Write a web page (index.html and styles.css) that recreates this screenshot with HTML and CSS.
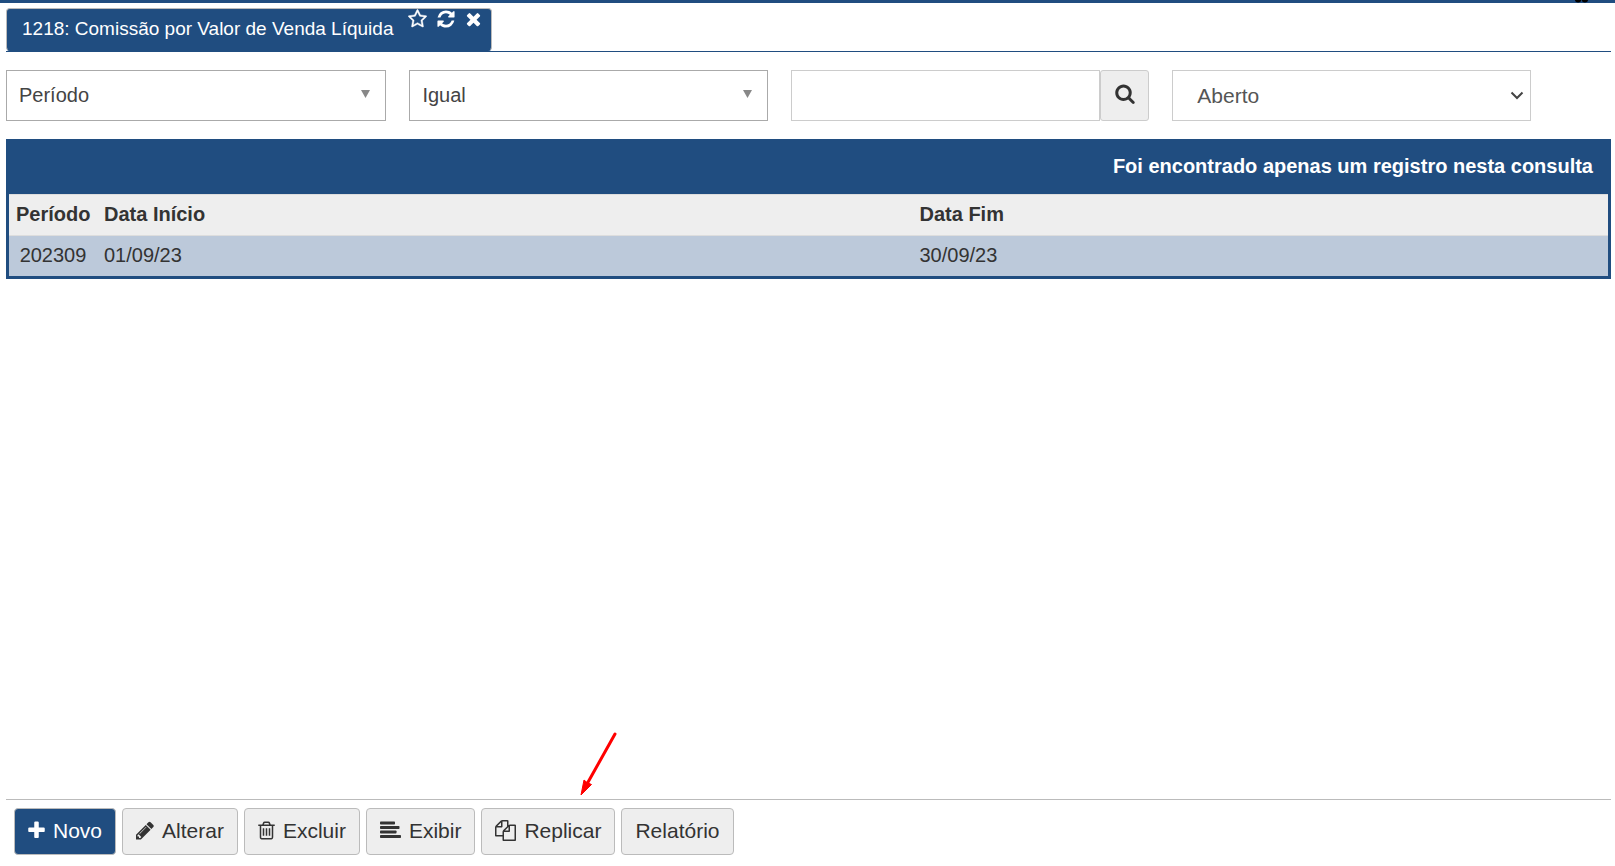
FILE: index.html
```html
<!DOCTYPE html>
<html lang="pt-BR">
<head>
<meta charset="utf-8">
<title>Comissão por Valor de Venda Líquida</title>
<link rel="stylesheet" href="styles.css">
</head>
<body>
<div class="topbar">
  <svg class="topbar-mark" viewBox="0 0 13 3" aria-hidden="true"><path d="M0 0h6.2q0 2.4-3.1 2.4T0 0zM6.8 0H13q0 2.4-3.1 2.4T6.8 0z"/></svg>
</div>

<header class="tabs">
  <div class="tab">
    <span class="tab-title">1218: Comissão por Valor de Venda Líquida</span>
    <button class="tab-action" type="button" aria-label="Favorito"><svg class="ico-star" viewBox="64 0 1664 1792"><path d="M1201 1004l306-297-422-62-189-382-189 382-422 62 306 297-73 421 378-199 377 199zm527-357q0 22-26 48l-363 354 86 500q1 7 1 20 0 50-41 50-19 0-40-12l-449-236-449 236q-22 12-40 12-21 0-31.5-14.5t-10.5-35.5q0-6 2-20l86-500-364-354q-25-27-25-48 0-37 56-46l502-73 225-455q19-41 49-41t49 41l225 455 502 73q56 9 56 46z"/></svg></button>
    <button class="tab-action" type="button" aria-label="Atualizar"><svg class="ico-refresh" viewBox="128 0 1536 1792"><path d="M1639 1056q0 5-1 7-64 268-268 434.5t-478 166.5q-146 0-282.5-55t-243.5-157l-129 129q-19 19-45 19t-45-19-19-45v-448q0-26 19-45t45-19h448q26 0 45 19t19 45-19 45l-137 137q71 66 161 102t187 36q134 0 250-65t186-179q11-17 53-117 8-23 30-23h192q13 0 22.5 9.5t9.5 22.5zm25-800v448q0 26-19 45t-45 19h-448q-26 0-45-19t-19-45 19-45l138-138q-148-137-349-137-134 0-250 65t-186 179q-11 17-53 117-8 23-30 23h-199q-13 0-22.5-9.5t-9.5-22.5v-7q65-268 270-434.5t480-166.5q146 0 284 55.5t245 156.5l130-129q19-19 45-19t45 19 19 45z"/></svg></button>
    <button class="tab-action" type="button" aria-label="Fechar"><svg class="ico-close" viewBox="192 0 1408 1792"><path d="M1490 1322q0 40-28 68l-136 136q-28 28-68 28t-68-28l-294-294-294 294q-28 28-68 28t-68-28l-136-136q-28-28-28-68t28-68l294-294-294-294q-28-28-28-68t28-68l136-136q28-28 68-28t68 28l294 294 294-294q28-28 68-28t68 28l136 136q28 28 28 68t-28 68l-294 294 294 294q28 28 28 68z"/></svg></button>
  </div>
</header>

<main class="content">
  <form class="filters">
    <div class="field">
      <select class="control control-dark" aria-label="Campo"><option>Período</option></select>
      <svg class="caret" viewBox="0 0 9 8" aria-hidden="true"><path d="M0 0h9L4.500 8z"/></svg>
    </div>
    <div class="field">
      <select class="control control-dark" aria-label="Operador"><option>Igual</option></select>
      <svg class="caret" viewBox="0 0 9 8" aria-hidden="true"><path d="M0 0h9L4.500 8z"/></svg>
    </div>
    <div class="field search">
      <input class="control" type="text" aria-label="Valor">
      <button class="search-btn" type="button" aria-label="Pesquisar"><svg class="ico-search" viewBox="64 0 1664 1792"><path d="M1216 832q0-185-131.500-316.500t-316.500-131.500-316.500 131.500-131.500 316.500 131.500 316.500 316.500 131.500 316.500-131.500 131.500-316.500zm512 832q0 52-38 90t-90 38q-54 0-90-38l-343-342q-179 124-399 124-143 0-273.500-55.500t-225-150-150-225-55.500-273.500 55.500-273.500 150-225 225-150 273.500-55.500 273.500 55.500 225 150 150 225 55.500 273.500q0 220-124 399l343 343q37 37 37 90z"/></svg></button>
    </div>
    <div class="field">
      <select class="control control-status" aria-label="Situação"><option>Aberto</option></select>
      <svg class="chevron" viewBox="0 0 14 9" aria-hidden="true"><path d="M1.500 1.500L7 7l5.500-5.500"/></svg>
    </div>
  </form>

  <section class="results">
    <p class="results-title">Foi encontrado apenas um registro nesta consulta</p>
    <table class="grid">
      <colgroup><col class="col-period"><col class="col-start"><col></colgroup>
      <thead><tr><th class="center">Período</th><th>Data Início</th><th>Data Fim</th></tr></thead>
      <tbody><tr><td class="center">202309</td><td>01/09/23</td><td>30/09/23</td></tr></tbody>
    </table>
  </section>
</main>

<footer class="actions">
  <button class="btn btn-primary" type="button"><svg class="ico-plus" viewBox="192 0 1408 1792"><path d="M1600 736v192q0 40-28 68t-68 28h-416v416q0 40-28 68t-68 28h-192q-40 0-68-28t-28-68v-416h-416q-40 0-68-28t-28-68v-192q0-40 28-68t68-28h416v-416q0-40 28-68t68-28h192q40 0 68 28t28 68v416h416q40 0 68 28t28 68z"/></svg>Novo</button>
  <button class="btn" type="button"><svg class="ico-pencil" viewBox="128 0 1536 1792"><path d="M491 1536l91-91-235-235-91 91v107h128v128h107zm523-928q0-22-22-22-10 0-17 7l-542 542q-7 7-7 17 0 22 22 22 10 0 17-7l542-542q7-7 7-17zm-54-192l416 416-832 832h-416v-416zm683 96q0 53-37 90l-166 166-416-416 166-165q36-38 90-38 53 0 91 38l235 234q37 39 37 91z"/></svg>Alterar</button>
  <button class="btn" type="button"><svg class="ico-trash" viewBox="192 0 1408 1792"><path d="M704 736v576q0 14-9 23t-23 9h-64q-14 0-23-9t-9-23v-576q0-14 9-23t23-9h64q14 0 23 9t9 23zm256 0v576q0 14-9 23t-23 9h-64q-14 0-23-9t-9-23v-576q0-14 9-23t23-9h64q14 0 23 9t9 23zm256 0v576q0 14-9 23t-23 9h-64q-14 0-23-9t-9-23v-576q0-14 9-23t23-9h64q14 0 23 9t9 23zm128 724v-948h-896v948q0 22 7 40.500t14.500 27 10.500 8.500h832q3 0 10.500-8.500t14.500-27 7-40.500zm-672-1076h448l-48-117q-7-9-17-11h-317q-10 2-17 11zm928 32v64q0 14-9 23t-23 9h-96v948q0 83-47 143.500t-113 60.500h-832q-66 0-113-58.500t-47-141.500v-952h-96q-14 0-23-9t-9-23v-64q0-14 9-23t23-9h309l70-167q15-37 54-63t79-26h320q40 0 79 26t54 63l70 167h309q14 0 23 9t9 23z"/></svg>Excluir</button>
  <button class="btn" type="button"><svg class="ico-wide" viewBox="0 0 1792 1792"><rect y="1280" width="1792" height="256" rx="64"/><rect y="896" width="1408" height="256" rx="64"/><rect y="512" width="1664" height="256" rx="64"/><rect y="128" width="1280" height="256" rx="64"/></svg>Exibir</button>
  <button class="btn btn-marked" type="button"><svg class="ico-wide" viewBox="0 0 1792 1792"><path d="M1696 384q40 0 68 28t28 68v1216q0 40-28 68t-68 28h-960q-40 0-68-28t-28-68v-288h-544q-40 0-68-28t-28-68v-672q0-40 20-88t48-76l408-408q28-28 76-48t88-20h416q40 0 68 28t28 68v328q68-40 128-40h416zm-544 213l-299 299h299v-299zm-640-384l-299 299h299v-299zm196 647l316-316v-416h-384v416q0 40-28 68t-68 28h-416v640h512v-256q0-40 20-88t48-76zm956 804v-1152h-384v416q0 40-28 68t-68 28h-416v640h896z"/></svg>Replicar<svg class="pointer" viewBox="0 0 38 64" aria-hidden="true"><path class="pointer-line" d="M35 2L7 52"/><path class="pointer-head" d="M1 63L4 48l3 2.500 4.500 2z"/></svg></button>
  <button class="btn" type="button">Relatório</button>
</footer>
</body>
</html>
```

FILE: styles.css
```css
* {
  box-sizing: border-box;
}

body {
  margin: 0;
  min-height: 100vh;
  display: flex;
  flex-direction: column;
  background: #fff;
  color: #333;
  font-family: "Liberation Sans", Arial, sans-serif;
  font-size: 20px;
}

button,
input,
select {
  font: inherit;
}

svg {
  display: block;
  flex: none;
  fill: currentColor;
}

.topbar {
  display: flex;
  justify-content: flex-end;
  height: 3px;
  padding-right: 27px;
  background: #204d80;
}

.topbar-mark {
  width: 13px;
  height: 3px;
  color: #000;
}

.tabs {
  display: flex;
  margin: 5px 4px 0 6px;
  border-bottom: 1px solid #204d80;
}

.tab {
  display: flex;
  align-items: flex-start;
  gap: 10px;
  height: 43px;
  padding: 0 9px 0 15px;
  border: 1px solid #bbb;
  border-bottom-color: #204d80;
  border-radius: 4px;
  background: #204d80;
  color: #fff;
}

.tab-title {
  padding-right: 5px;
  font-size: 19px;
  line-height: 40px;
}

.tab-action {
  padding: 0;
  border: 0;
  background: none;
  color: inherit;
}

.ico-star {
  width: 19px;
  height: 20px;
  stroke: currentColor;
  stroke-width: 40;
}

.ico-refresh {
  width: 18px;
  height: 20px;
}

.ico-close {
  width: 17px;
  height: 20px;
}

.content {
  flex: 1;
  padding: 18px 4px 0 6px;
}

.filters {
  display: grid;
  grid-template-columns: 381fr 359fr 359fr 359fr;
  gap: 23px;
  padding-right: 5%;
}

.field {
  position: relative;
  display: flex;
  min-width: 0;
}

.control {
  flex: 1;
  min-width: 0;
  height: 51px;
  margin: 0;
  padding: 0 12px 2px;
  border: 1px solid #ccc;
  border-radius: 0;
  background: #fff;
  color: #444;
  appearance: none;
}

.control-dark {
  border-color: #aaa;
}

.control-status {
  padding: 0 24px;
  color: #555;
  font-size: 21px;
}

.caret {
  position: absolute;
  top: 20px;
  right: 16px;
  width: 9px;
  height: 8px;
  color: #888;
  pointer-events: none;
}

.chevron {
  position: absolute;
  top: 21px;
  right: 7px;
  width: 14px;
  height: 9px;
  fill: none;
  stroke: #444;
  stroke-width: 2;
  pointer-events: none;
}

.search-btn {
  display: flex;
  align-items: center;
  justify-content: center;
  width: 49px;
  padding: 0 0 5px;
  border: 1px solid #ccc;
  border-radius: 3px;
  background: #eee;
  color: #333;
}

.ico-search {
  width: 20px;
  height: 21px;
}

.results {
  margin-top: 18px;
  border: 3px solid #204d80;
}

.results-title {
  margin: 0;
  padding: 0 15px 4px;
  background: #204d80;
  color: #fff;
  font-weight: bold;
  line-height: 48px;
  text-align: right;
}

.grid {
  width: 100%;
  border-collapse: collapse;
  table-layout: fixed;
}

.col-period {
  width: 88px;
}

.col-start {
  width: 51%;
}

.grid th,
.grid td {
  padding: 0 7px 2px;
  border-top: 1px solid #ddd;
  line-height: 38px;
  text-align: left;
}

.grid th {
  background: #eee;
}

.grid td {
  background: #bcc9da;
}

.grid .center {
  text-align: center;
}

.actions {
  display: flex;
  gap: 6px;
  margin: 0 4px 0 6px;
  padding: 8px 8px 11px;
  border-top: 1px solid #bbb;
}

.btn {
  display: flex;
  align-items: center;
  gap: 8px;
  height: 47px;
  padding: 0 13px 2px;
  border: 1px solid #bbb;
  border-radius: 4px;
  background: #eee;
  color: #333;
  font-size: 21px;
}

.btn-primary {
  background: #204d80;
  color: #fff;
}

.btn-marked {
  position: relative;
}

.ico-plus,
.ico-trash {
  width: 17px;
  height: 21px;
}

.ico-pencil {
  width: 18px;
  height: 21px;
}

.ico-wide {
  width: 21px;
  height: 21px;
}

.pointer {
  position: absolute;
  left: 98px;
  bottom: 58px;
  width: 38px;
  height: 64px;
}

.pointer-line {
  fill: none;
  stroke: #f00;
  stroke-width: 3;
  stroke-linecap: round;
}

.pointer-head {
  fill: #f00;
  stroke: #f00;
}
```
